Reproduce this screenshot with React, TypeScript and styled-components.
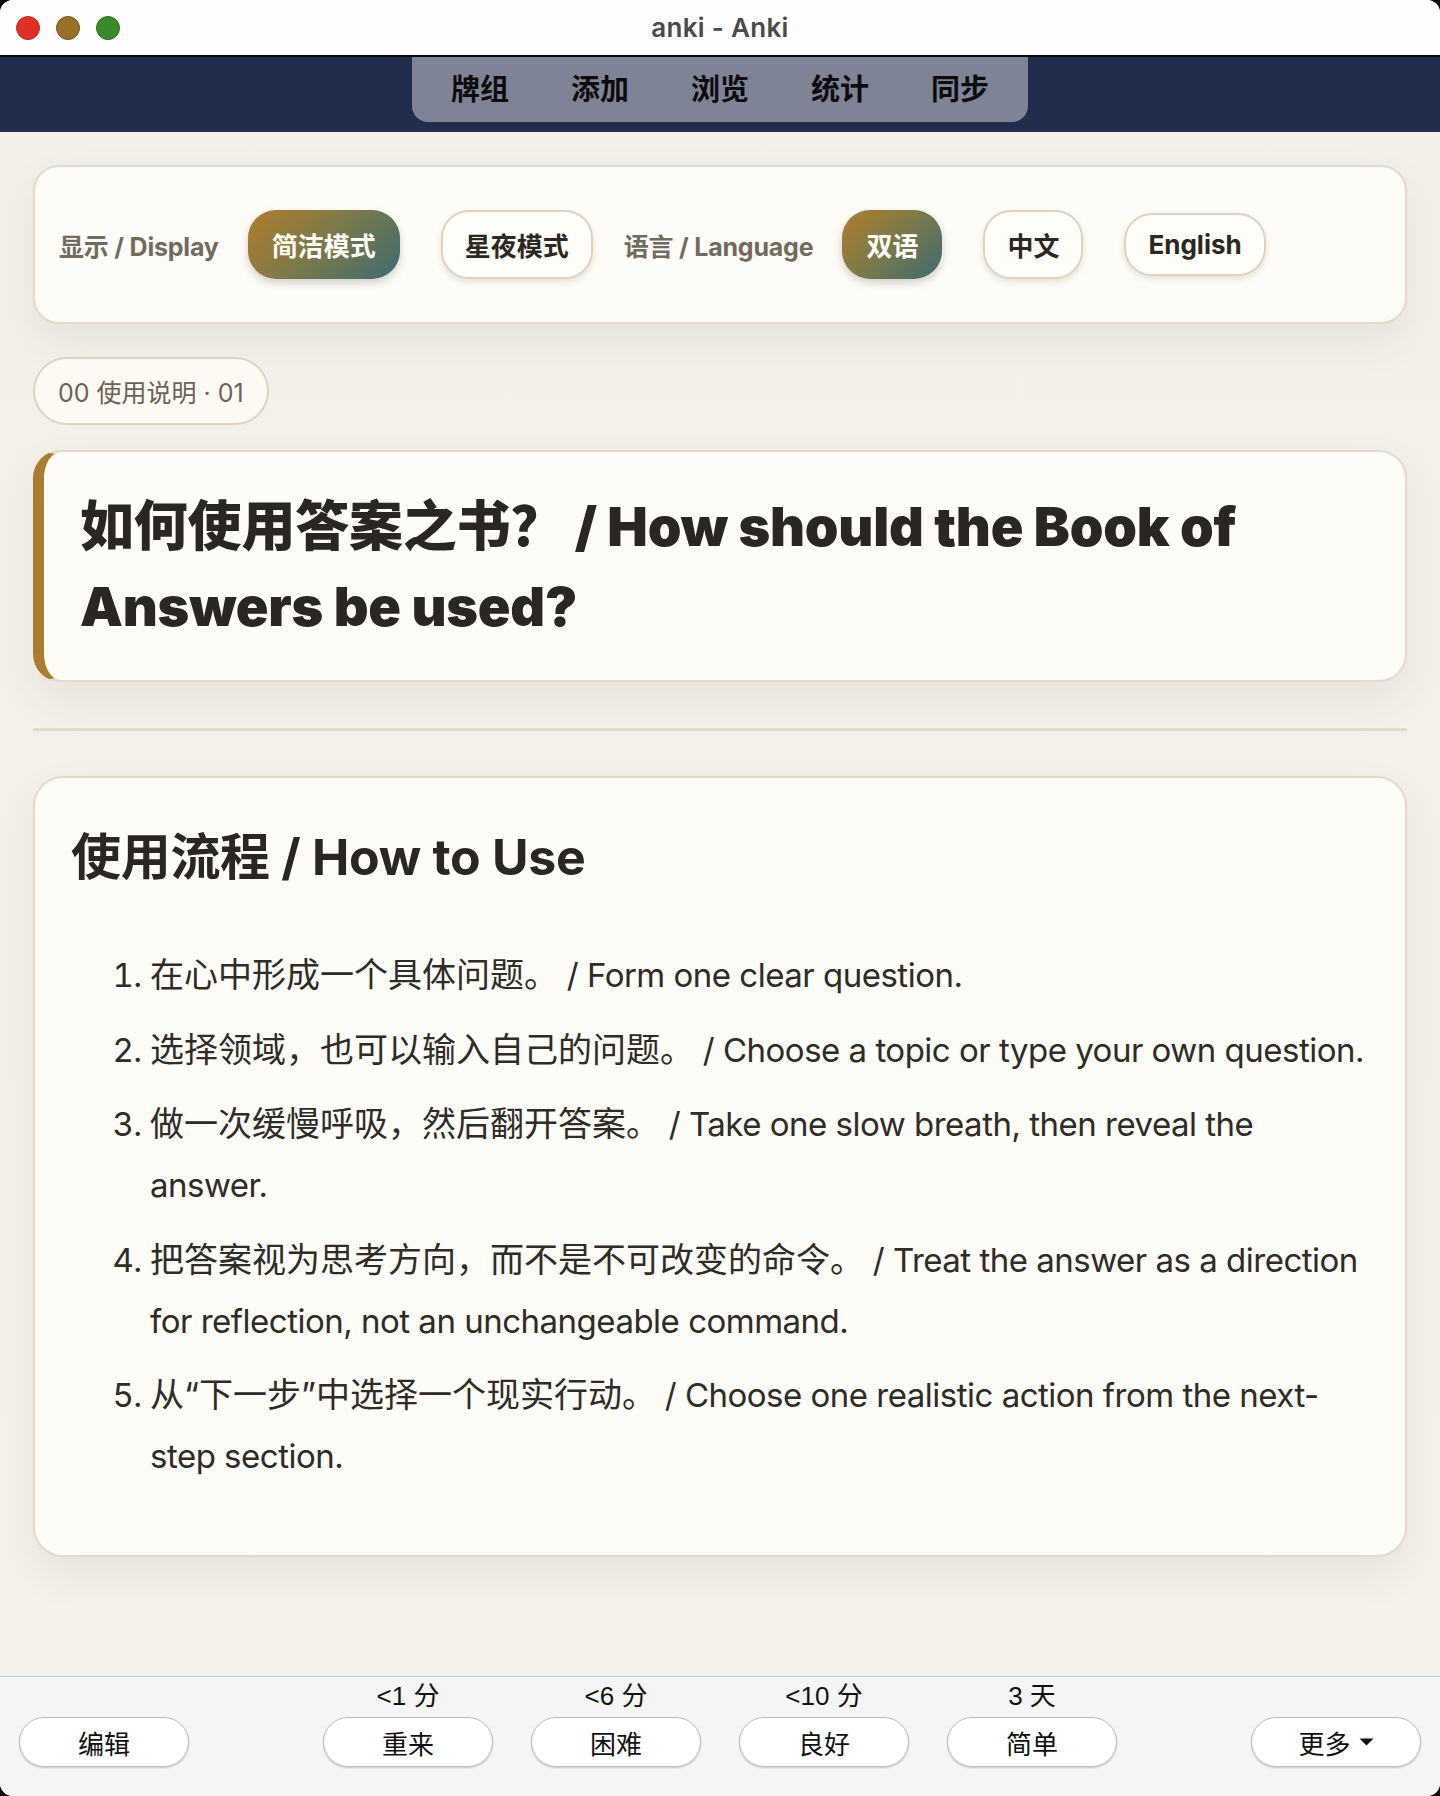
import React from "react";
import styled, { createGlobalStyle } from "styled-components";

const GlobalStyle = createGlobalStyle`
  html, body { margin: 0; padding: 0; background: #000; }
  body { font-family: "Inter", "Noto Sans CJK SC", sans-serif; }
  * { box-sizing: border-box; }
`;

const Window = styled.div`
  width: 1440px;
  height: 1796px;
  border-radius: 13px;
  overflow: hidden;
  display: flex;
  flex-direction: column;
  background: linear-gradient(180deg, #f3f0e9 0%, #f5f2eb 100%);
`;

const TitleBar = styled.header`
  flex: none;
  height: 57px;
  background: #fefefe;
  border-bottom: 2px solid #070707;
  display: grid;
  grid-template-columns: 1fr auto 1fr;
  align-items: center;
`;

const Lights = styled.div`
  display: flex;
  gap: 16px;
  padding-left: 16px;
`;

const Light = styled.span<{ $fill: string; $edge: string }>`
  width: 24px;
  height: 24px;
  border-radius: 50%;
  background: ${(p) => p.$fill};
  border: 1px solid ${(p) => p.$edge};
`;

const WindowTitle = styled.div`
  font-family: "Inter", sans-serif;
  font-size: 26px;
  font-weight: 600;
  letter-spacing: 0.3px;
  color: #4a4a4a;
`;

const TopNav = styled.nav`
  flex: none;
  height: 75px;
  background: #222d4d;
  display: flex;
  justify-content: center;
  align-items: flex-start;
`;

const NavPill = styled.div`
  height: 65px;
  background: #7e8496;
  border-radius: 0 0 16px 16px;
  padding: 0 8px 5px;
  display: flex;
  align-items: center;
`;

const NavItem = styled.span`
  padding: 0 31px;
  font-family: "Noto Sans CJK SC", sans-serif;
  font-size: 29px;
  font-weight: 700;
  color: #0c0c0c;
`;

const Content = styled.main`
  flex: 1;
  padding: 33px 33px 0;
  display: flex;
  flex-direction: column;
  align-items: stretch;
`;

const Panel = styled.section`
  background: #fdfcf6;
  border: 2px solid #e3dac8;
  box-shadow: 0 18px 40px rgba(90, 70, 40, 0.08);
`;

const DisplayCard = styled(Panel)`
  border-radius: 26px;
  padding: 43px 24px;
  display: flex;
  align-items: center;
  gap: 31px;
`;

const OptionGroup = styled.div`
  display: flex;
  align-items: center;
  gap: 29px;
`;

const OptionLabel = styled.span`
  font-size: 25px;
  font-weight: 700;
  color: #736a5e;
  letter-spacing: -0.2px;
`;

const Options = styled.div`
  display: flex;
  align-items: center;
  gap: 41px;
`;

const Chip = styled.button<{ $active?: boolean }>`
  font-family: "Inter", "Noto Sans CJK SC", sans-serif;
  font-size: 26px;
  font-weight: 700;
  line-height: normal;
  padding: 14px 22px;
  border-radius: 28px;
  border: 2px solid ${(p) => (p.$active ? "transparent" : "#ddd3c1")};
  color: ${(p) => (p.$active ? "#fffdf6" : "#2b2824")};
  background: ${(p) =>
    p.$active
      ? "linear-gradient(135deg, #b07e2b 0%, #7b7a4a 48%, #3d6b6f 100%) border-box"
      : "#fffdf8"};
  box-shadow: ${(p) =>
    p.$active
      ? "0 4px 8px rgba(60, 50, 30, 0.22)"
      : "0 3px 6px rgba(110, 90, 55, 0.16)"};
`;

const Crumb = styled.div`
  align-self: flex-start;
  margin-top: 33px;
  font-size: 25px;
  font-weight: 400;
  line-height: normal;
  color: #6b6258;
  padding: 14px 23px;
  border: 2px solid #ddd3c1;
  border-radius: 34px;
  background: #fcfaf3;
`;

const TitleCard = styled(Panel)`
  margin-top: 25px;
  border-radius: 28px;
  border-left: 11px solid #a97c2f;
  padding: 35px 36px 33px 36px;
`;

const Title = styled.h1`
  margin: 0;
  font-size: 54px;
  font-weight: 900;
  line-height: 80px;
  letter-spacing: -0.2px;
  color: #2a2723;
`;

const Divider = styled.hr`
  margin: 46px 0 45px;
  height: 3px;
  border: 0;
  background: #e2d9c7;
`;

const GuideCard = styled(Panel)`
  border-radius: 30px;
  padding: 46px 36px 68px;
`;

const GuideHeading = styled.h2`
  margin: 0;
  font-size: 50px;
  font-weight: 700;
  line-height: 67px;
  letter-spacing: -0.3px;
  color: #2a2723;
`;

const Steps = styled.ol`
  margin: 54px 0 0;
  padding-left: 79px;
`;

const Step = styled.li`
  font-size: 33px;
  font-weight: 400;
  line-height: 61px;
  letter-spacing: -0.5px;
  color: #2f2b27;
  margin-bottom: 13.5px;
  &:last-child { margin-bottom: 0; }
`;

const Zh = styled.span`
  font-size: 34px;
  line-height: 1;
  letter-spacing: 0;
`;

const ReviewBar = styled.footer`
  flex: none;
  height: 120px;
  border-top: 1px solid #c9c9c9;
  background: #f5f5f5;
  display: flex;
  justify-content: space-between;
  align-items: flex-end;
  padding: 0 19px 29px;
`;

const AnswerGroup = styled.div`
  display: flex;
  align-items: flex-end;
  gap: 38px;
`;

const AnswerSlot = styled.div`
  display: flex;
  flex-direction: column;
  align-items: center;
`;

const Interval = styled.span`
  font-family: "Liberation Sans", "Noto Sans CJK SC", sans-serif;
  font-size: 26px;
  line-height: 28px;
  color: #111;
  margin-bottom: 7px;
`;

const BarButton = styled.button`
  width: 170px;
  height: 50px;
  border-radius: 25px;
  border: 1px solid #bdbdbd;
  background: #fff;
  box-shadow: 0 1px 2px rgba(0, 0, 0, 0.18);
  font-family: "Liberation Sans", "Noto Sans CJK SC", sans-serif;
  font-size: 26px;
  color: #111;
  display: flex;
  align-items: center;
  justify-content: center;
  gap: 8px;
  padding: 0;
`;

const Caret = () => (
  <svg width="15" height="8" viewBox="0 0 15 8" aria-hidden="true">
    <path d="M0.5 0.5 H14.5 L7.5 7.5 Z" fill="#111" />
  </svg>
);

const steps: [string, string][] = [
  ["在心中形成一个具体问题。", "/ Form one clear question."],
  ["选择领域，也可以输入自己的问题。", "/ Choose a topic or type your own question."],
  ["做一次缓慢呼吸，然后翻开答案。", "/ Take one slow breath, then reveal the answer."],
  [
    "把答案视为思考方向，而不是不可改变的命令。",
    "/ Treat the answer as a direction for reflection, not an unchangeable command.",
  ],
  ["从“下一步”中选择一个现实行动。", "/ Choose one realistic action from the next-step section."],
];

const answers = [
  { time: "<1 分", label: "重来" },
  { time: "<6 分", label: "困难" },
  { time: "<10 分", label: "良好" },
  { time: "3 天", label: "简单" },
];

export default function App() {
  return (
    <>
      <GlobalStyle />
      <Window>
        <TitleBar>
          <Lights>
            <Light $fill="#de3124" $edge="#b8271c" />
            <Light $fill="#9b7125" $edge="#77531a" />
            <Light $fill="#3b8a29" $edge="#2b6a1c" />
          </Lights>
          <WindowTitle>anki - Anki</WindowTitle>
          <div />
        </TitleBar>
        <TopNav>
          <NavPill>
            {["牌组", "添加", "浏览", "统计", "同步"].map((t) => (
              <NavItem key={t}>{t}</NavItem>
            ))}
          </NavPill>
        </TopNav>
        <Content>
          <DisplayCard>
            <OptionGroup>
              <OptionLabel>显示 / Display</OptionLabel>
              <Options>
                <Chip $active>简洁模式</Chip>
                <Chip>星夜模式</Chip>
              </Options>
            </OptionGroup>
            <OptionGroup>
              <OptionLabel>语言 / Language</OptionLabel>
              <Options>
                <Chip $active>双语</Chip>
                <Chip>中文</Chip>
                <Chip>English</Chip>
              </Options>
            </OptionGroup>
          </DisplayCard>
          <Crumb>00 使用说明 · 01</Crumb>
          <TitleCard>
            <Title>如何使用答案之书？ / How should the Book of Answers be used?</Title>
          </TitleCard>
          <Divider />
          <GuideCard>
            <GuideHeading>使用流程 / How to Use</GuideHeading>
            <Steps>
              {steps.map(([zh, en]) => (
                <Step key={zh}>
                  <Zh>{zh}</Zh> {en}
                </Step>
              ))}
            </Steps>
          </GuideCard>
        </Content>
        <ReviewBar>
          <BarButton>编辑</BarButton>
          <AnswerGroup>
            {answers.map((a) => (
              <AnswerSlot key={a.label}>
                <Interval>{a.time}</Interval>
                <BarButton>{a.label}</BarButton>
              </AnswerSlot>
            ))}
          </AnswerGroup>
          <BarButton>
            更多
            <Caret />
          </BarButton>
        </ReviewBar>
      </Window>
    </>
  );
}
